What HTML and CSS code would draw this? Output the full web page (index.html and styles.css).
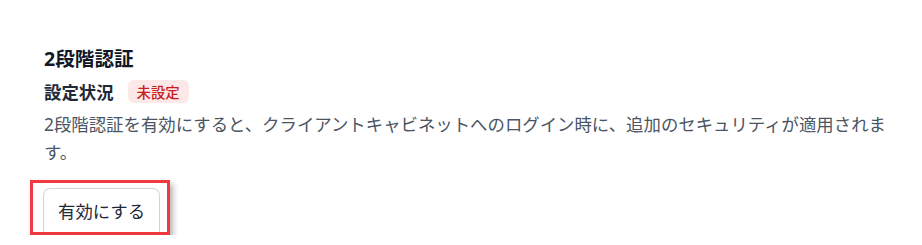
FILE: index.html
```html
<!DOCTYPE html>
<html lang="ja">
<head>
    <meta charset="UTF-8">
    <meta name="viewport" content="width=device-width, initial-scale=1.0">
    <title>2段階認証</title>
    <link rel="stylesheet" href="styles.css">
</head>
<body>

    <section class="security-section">
        <h2 class="section-title">2段階認証</h2>
        <div class="status-row">
            <span class="status-label">設定状況</span>
            <span class="badge badge-off">未設定</span>
        </div>
        <p class="description">2段階認証を有効にすると、クライアントキャビネットへのログイン時に、追加のセキュリティが適用されます。</p>
        <div class="actions">
            <div class="highlight">
                <button class="btn" type="button">有効にする</button>
            </div>
        </div>
    </section>

</body>
</html>
```

FILE: styles.css
```css
body {
    font-family: "Noto Sans", "Noto Sans CJK JP", sans-serif;
    margin: 0;
    padding: 0;
    background: #fff;
}

.security-section {
    padding: 45px 0 0 44px;
    max-width: 855px;
}

.section-title {
    margin: 0;
    font-size: 19.6px;
    line-height: 28px;
    font-weight: 700;
    color: #111827;
}

.status-row {
    display: flex;
    align-items: center;
    gap: 14px;
    height: 23px;
    margin-top: 7px;
}

.status-label {
    font-size: 17.4px;
    font-weight: 700;
    color: #1f2937;
}

.badge {
    display: inline-flex;
    align-items: center;
    height: 23px;
    padding: 0 9px;
    border-radius: 6px;
    font-size: 14.4px;
    font-weight: 500;
}

.badge-off {
    background: #fde8e8;
    color: #c81e1e;
}

.description {
    margin: 7px 0 0;
    font-size: 17.4px;
    line-height: 28px;
    color: #4b5563;
}

.actions {
    display: flex;
    margin: 14px 0 0 -14px;
}

/* annotation frame around the button */
.highlight {
    display: flex;
    padding: 5px 7px 0 10px;
    border: 3px solid #f0393e;
    box-shadow: 3px 4px 6px rgba(0, 0, 0, 0.3);
}

.btn {
    display: block;
    height: 44px;
    padding: 0 14px;
    font-family: inherit;
    font-size: 17.4px;
    color: #1f2937;
    background: #fff;
    border: 1px solid #d1d5db;
    border-bottom: 0;
    border-radius: 7px 7px 0 0;
    cursor: pointer;
}
```
